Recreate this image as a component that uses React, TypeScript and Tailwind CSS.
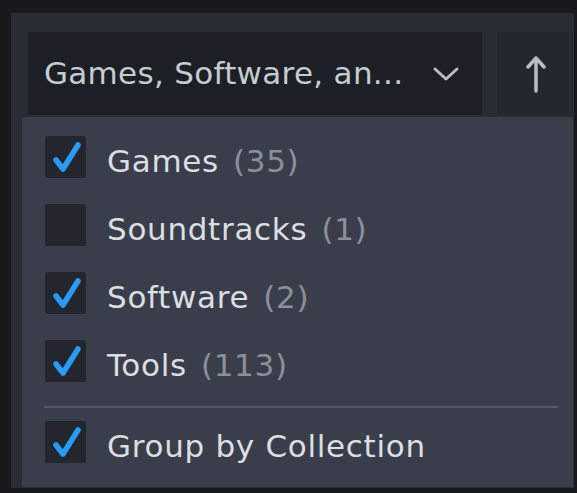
import React from 'react';

type Item = { label: string; count?: number; checked: boolean };

const items: Item[] = [
  { label: 'Games', count: 35, checked: true },
  { label: 'Soundtracks', count: 1, checked: false },
  { label: 'Software', count: 2, checked: true },
  { label: 'Tools', count: 113, checked: true },
];

const CheckBox: React.FC<{ checked: boolean }> = ({ checked }) => (
  <div className="w-[41px] h-[42px] shrink-0 bg-[#23262e] rounded-[2px] flex items-center justify-center">
    {checked && (
      <svg width="34" height="34" viewBox="0 0 34 34" fill="none">
        <path
          d="M7 20 L14 29 L29 5"
          stroke="#2a9bf5"
          strokeWidth="5.5"
          strokeLinecap="round"
          strokeLinejoin="round"
        />
      </svg>
    )}
  </div>
);

const Row: React.FC<{ item: Item }> = ({ item }) => (
  <div className="h-[68px] flex items-center">
    <CheckBox checked={item.checked} />
    <div className="ml-[21px] pt-[8px] flex">
      <span className="text-[#dcdfe2]">{item.label}</span>
      {item.count !== undefined && (
        <span className="ml-[14px] text-[#8a909b]">({item.count})</span>
      )}
    </div>
  </div>
);

const App: React.FC = () => {
  return (
    <div
      className="w-[577px] h-[493px] bg-[#18191c] pt-[13px] pl-[11px] overflow-hidden tracking-[0.7px] text-[31px]"
      style={{ fontFamily: '"DejaVu Sans", "Noto Sans", sans-serif' }}
    >
      <div className="w-[563px] h-[475px] bg-[#282c35]">
        <div className="flex pt-[19px] pl-[17px]">
          <div className="w-[454px] h-[83px] bg-[#1c1f25] flex items-center pl-[16px] pr-[22px]">
            <span className="text-[#c8cbd0] whitespace-nowrap tracking-[0.3px]">Games, Software, an...</span>
            <svg className="ml-auto" width="28" height="16" viewBox="0 0 28 16" fill="none">
              <path d="M3 3 L14 13 L25 3" stroke="#b9bdc3" strokeWidth="3" strokeLinecap="round" strokeLinejoin="round" />
            </svg>
          </div>
          <div className="ml-[15px] w-[72px] h-[83px] bg-[#23272e] flex items-center justify-center pl-[6px]">
            <svg width="20" height="38" viewBox="0 0 20 38" fill="none">
              <path d="M10 36 L10 3 M2 12 L10 3 L18 12" stroke="#b9bdc3" strokeWidth="3.5" strokeLinecap="round" strokeLinejoin="round" />
            </svg>
          </div>
        </div>
        <div className="ml-[11px] mt-[2px] w-[551px] h-[370px] bg-[#3a3e4a] pt-[6px] pl-[23px] pr-[15px]">
          {items.map((item) => (
            <Row key={item.label} item={item} />
          ))}
          <div className="mt-[11px] -ml-[1px] h-[2px] bg-[#555a66]" />
          <Row item={{ label: 'Group by Collection', checked: true }} />
        </div>
      </div>
    </div>
  );
};

export default App;
